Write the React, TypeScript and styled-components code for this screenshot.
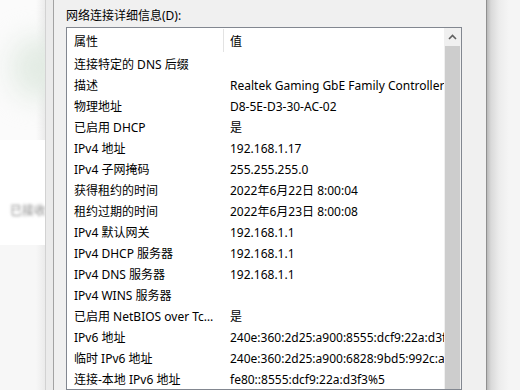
import React from "react";
import styled, { createGlobalStyle } from "styled-components";

const GlobalStyle = createGlobalStyle`
  html, body { margin: 0; padding: 0; }
  body {
    width: 520px;
    height: 390px;
    overflow: hidden;
    font-family: "Noto Sans", "Noto Sans CJK SC", sans-serif;
    font-size: 12px;
    color: #000;
  }
`;

const Screen = styled.div`
  display: flex;
  width: 520px;
  height: 390px;
  overflow: hidden;
  background: #f5f5f5;
`;

const Backdrop = styled.div`
  width: 45px;
  flex: none;
  display: flex;
  flex-direction: column;
  overflow: hidden;
  background: linear-gradient(to right, #fbfbfb 0, #fbfbfb 36px, #ececec 45px);
`;

const BackdropTop = styled.div`
  height: 140px;
  padding-top: 38px;
  box-sizing: border-box;
`;

const GreenGlow = styled.div`
  width: 56px;
  height: 60px;
  margin-left: 12px;
  border-radius: 40%;
  background: #e2ebe3;
  filter: blur(14px);
`;

const BackdropMiddle = styled.div`
  height: 105px;
  display: flex;
  align-items: flex-end;
  padding: 0 0 26px 10px;
  box-sizing: border-box;
  background: #ffffff;
`;

const BlurLabel = styled.span`
  font-size: 12px;
  color: #8a8a8a;
  white-space: nowrap;
  filter: blur(1.4px);
`;

const BackdropBottom = styled.div`
  flex: 1;
  background: linear-gradient(to right, #f7f7f7 0, #f7f7f7 36px, #ebebeb 45px);
`;

const OuterFrame = styled.div`
  width: 7px;
  flex: none;
  border-left: 1px solid #d2d2d2;
  background: #ebebeb;
`;

const Dialog = styled.div`
  width: 420px;
  flex: none;
  border-left: 1px solid #a3a3a3;
  border-right: 1px solid #8f8f8f;
  background: #f0f0f0;
  padding: 7px 0 0 12px;
  box-sizing: content-box;
  display: flex;
  flex-direction: column;
`;

const Label = styled.div`
  height: 16px;
  line-height: 17px;
  margin-bottom: 4px;
  white-space: nowrap;
`;

const ListBox = styled.div`
  width: 394px;
  height: 400px;
  border: 1px solid #828790;
  background: #fff;
  display: flex;
`;

const Table = styled.div`
  width: 377px;
  flex: none;
  display: flex;
  flex-direction: column;
`;

const HeaderRow = styled.div`
  height: 25px;
  display: grid;
  grid-template-columns: 156px 1fr;
`;

const HeaderCell = styled.div<{ $divider?: boolean }>`
  line-height: 25px;
  padding-left: ${(p) => (p.$divider ? "6px" : "7px")};
  border-left: ${(p) => (p.$divider ? "1px solid #e3e3e3" : "none")};
  margin-top: 1px;
  height: 23px;
  white-space: nowrap;
`;

const Row = styled.div`
  height: 21px;
  display: grid;
  grid-template-columns: 156px 221px;
`;

const Cell = styled.div<{ $ellipsis?: boolean }>`
  height: 21px;
  line-height: 23px;
  padding-left: 7px;
  padding-right: ${(p) => (p.$ellipsis ? "4px" : "0")};
  white-space: nowrap;
  overflow: hidden;
  text-overflow: ${(p) => (p.$ellipsis ? "ellipsis" : "clip")};
`;

const Scrollbar = styled.div`
  width: 17px;
  flex: none;
  background: #f0f0f0;
  display: flex;
  flex-direction: column;
`;

const ScrollButton = styled.div`
  height: 17px;
  display: flex;
  align-items: center;
  justify-content: center;
`;

const Thumb = styled.div`
  flex: 1;
  margin: 1px 1px 0 1px;
  background: #cdcdcd;
`;

const RightShade = styled.div`
  flex: 1;
  background: linear-gradient(to right, #b9b9b9 0, #d9d9d9 4px, #ececec 12px, #f5f5f5 22px);
`;

const rows: [string, string][] = [
  ["连接特定的 DNS 后缀", ""],
  ["描述", "Realtek Gaming GbE Family Controller"],
  ["物理地址", "D8-5E-D3-30-AC-02"],
  ["已启用 DHCP", "是"],
  ["IPv4 地址", "192.168.1.17"],
  ["IPv4 子网掩码", "255.255.255.0"],
  ["获得租约的时间", "2022年6月22日 8:00:04"],
  ["租约过期的时间", "2022年6月23日 8:00:08"],
  ["IPv4 默认网关", "192.168.1.1"],
  ["IPv4 DHCP 服务器", "192.168.1.1"],
  ["IPv4 DNS 服务器", "192.168.1.1"],
  ["IPv4 WINS 服务器", ""],
  ["已启用 NetBIOS over Tcpip", "是"],
  ["IPv6 地址", "240e:360:2d25:a900:8555:dcf9:22a:d3f3"],
  ["临时 IPv6 地址", "240e:360:2d25:a900:6828:9bd5:992c:a1b2"],
  ["连接-本地 IPv6 地址", "fe80::8555:dcf9:22a:d3f3%5"],
];

export default function App() {
  return (
    <>
      <GlobalStyle />
      <Screen>
        <Backdrop>
          <BackdropTop>
            <GreenGlow />
          </BackdropTop>
          <BackdropMiddle>
            <BlurLabel>已接收</BlurLabel>
          </BackdropMiddle>
          <BackdropBottom />
        </Backdrop>
        <OuterFrame />
        <Dialog>
          <Label>网络连接详细信息(D):</Label>
          <ListBox>
            <Table>
              <HeaderRow>
                <HeaderCell>属性</HeaderCell>
                <HeaderCell $divider>值</HeaderCell>
              </HeaderRow>
              {rows.map(([k, v]) => (
                <Row key={k}>
                  <Cell $ellipsis>{k}</Cell>
                  <Cell>{v}</Cell>
                </Row>
              ))}
            </Table>
            <Scrollbar>
              <ScrollButton>
                <svg width="9" height="6" viewBox="0 0 9 6">
                  <path d="M1 5 L4.5 1.5 L8 5" fill="none" stroke="#606060" strokeWidth="1.6" />
                </svg>
              </ScrollButton>
              <Thumb />
            </Scrollbar>
          </ListBox>
        </Dialog>
        <RightShade />
      </Screen>
    </>
  );
}
